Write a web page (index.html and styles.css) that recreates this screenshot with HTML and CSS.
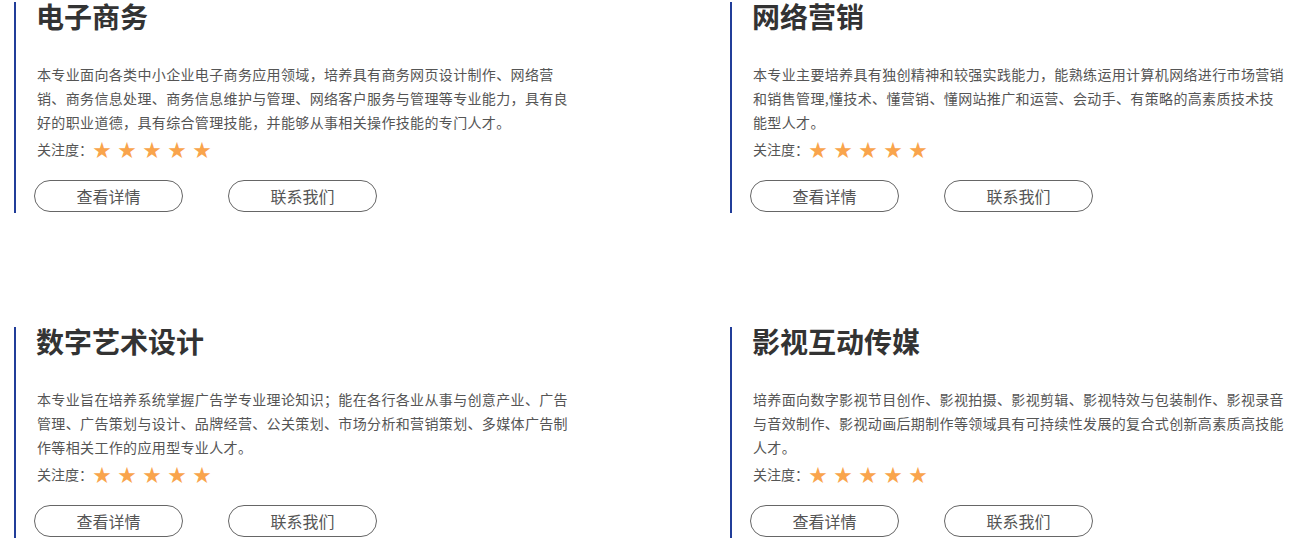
FILE: index.html
```html
<!DOCTYPE html>
<html lang="zh-CN">
<head>
  <meta charset="UTF-8" />
  <meta name="viewport" content="width=device-width, initial-scale=1.0" />
  <title>专业介绍</title>
  <link rel="stylesheet" href="styles.css">
</head>
<body>
  <div class="majors">
    <!-- 电子商务 -->
    <div class="major">
      <h2>电子商务</h2>
      <p class="desc">本专业面向各类中小企业电子商务应用领域，培养具有商务网页设计制作、网络营销、商务信息处理、商务信息维护与管理、网络客户服务与管理等专业能力，具有良好的职业道德，具有综合管理技能，并能够从事相关操作技能的专门人才。</p>
      <div class="rate">关注度：<span class="stars">★★★★★</span></div>
      <div class="btns">
        <a href="#" class="btn">查看详情</a>
        <a href="#" class="btn">联系我们</a>
      </div>
    </div>

    <!-- 网络营销 -->
    <div class="major">
      <h2>网络营销</h2>
      <p class="desc">本专业主要培养具有独创精神和较强实践能力，能熟练运用计算机网络进行市场营销和销售管理,懂技术、懂营销、懂网站推广和运营、会动手、有策略的高素质技术技能型人才。</p>
      <div class="rate">关注度：<span class="stars">★★★★★</span></div>
      <div class="btns">
        <a href="#" class="btn">查看详情</a>
        <a href="#" class="btn">联系我们</a>
      </div>
    </div>

    <!-- 数字艺术设计 -->
    <div class="major">
      <h2>数字艺术设计</h2>
      <p class="desc">本专业旨在培养系统掌握广告学专业理论知识；能在各行各业从事与创意产业、广告管理、广告策划与设计、品牌经营、公关策划、市场分析和营销策划、多媒体广告制作等相关工作的应用型专业人才。</p>
      <div class="rate">关注度：<span class="stars">★★★★★</span></div>
      <div class="btns">
        <a href="#" class="btn">查看详情</a>
        <a href="#" class="btn">联系我们</a>
      </div>
    </div>

    <!-- 影视互动传媒 -->
    <div class="major">
      <h2>影视互动传媒</h2>
      <p class="desc">培养面向数字影视节目创作、影视拍摄、影视剪辑、影视特效与包装制作、影视录音与音效制作、影视动画后期制作等领域具有可持续性发展的复合式创新高素质高技能人才。</p>
      <div class="rate">关注度：<span class="stars">★★★★★</span></div>
      <div class="btns">
        <a href="#" class="btn">查看详情</a>
        <a href="#" class="btn">联系我们</a>
      </div>
    </div>
  </div>
</body>
</html>
```

FILE: styles.css
```css
/* Base */
* { box-sizing: border-box; margin: 0; padding: 0; }
body {
  font-family: "Noto Sans CJK SC", "Microsoft YaHei", sans-serif;
  background: #fff;
  color: #555;
}
a { text-decoration: none; }

/* Two-column list of majors */
.majors {
  display: grid;
  grid-template-columns: 716px 1fr;
  row-gap: 114px;
  padding: 2px 0 0 14px;
}
.major {
  border-left: 2px solid #213d99;
  padding: 0 0 1px 21px;
}
.major h2 {
  margin-left: -1px;
  font-size: 28px;
  line-height: 28px;
  font-weight: bold;
  color: #333;
}
.desc {
  width: 532px;
  margin-top: 32px;
  font-size: 14px;
  line-height: 24px;
  letter-spacing: 0.35px;
  color: #555;
}
/* Rating row */
.rate {
  margin-top: 3px;
  font-size: 14px;
  line-height: 24px;
  color: #555;
  height: 24px;
}
.stars {
  font-size: 18px;
  letter-spacing: 7px;
  color: #f9a44c;
  vertical-align: top;
  line-height: 24px;
}
/* Buttons */
.btns {
  display: flex;
  gap: 45px;
  margin-top: 19px;
  margin-left: -3px;
}
.btn {
  display: block;
  width: 149px;
  height: 32px;
  border: 1px solid #666;
  border-radius: 16px;
  font-size: 16px;
  line-height: 30px;
  text-align: center;
  color: #555;
}
```
